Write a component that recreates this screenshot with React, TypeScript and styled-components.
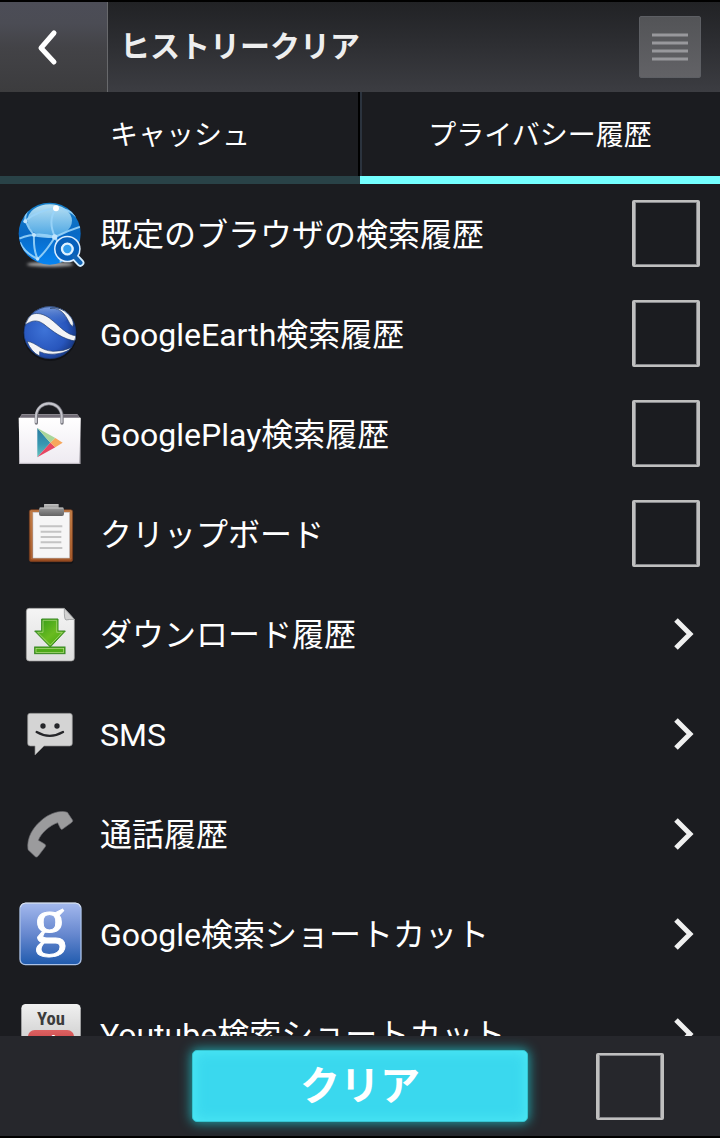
import React from 'react';
import styled, { createGlobalStyle } from 'styled-components';

const GlobalStyle = createGlobalStyle`
  *, *::before, *::after { box-sizing: border-box; }
  body {
    margin: 0;
    background: #000;
    color: #fff;
    font-family: Roboto, "Noto Sans CJK JP", sans-serif;
  }
  button, input { font: inherit; color: inherit; }
`;

const Screen = styled.div`
  display: flex;
  flex-direction: column;
  height: 100vh;
  border-top: 2px solid #000;
  border-bottom: 2px solid #000;
  background: #1b1c20;
`;

const Header = styled.header`
  display: flex;
  align-items: center;
  flex: none;
  height: 90px;
  padding-right: 19px;
  background: linear-gradient(#212225, #2e2f33 50%, #3c3d42);
`;

const BackButton = styled.button`
  display: flex;
  align-items: center;
  justify-content: center;
  width: 108px;
  height: 100%;
  padding: 0 12px 0 0;
  border: 0;
  border-right: 1px solid #68696c;
  background: linear-gradient(#4c4d57, #4b4c54 24%, #434347 50%, #3c3c3e);
`;

const Title = styled.h1`
  flex: 1;
  margin: 0;
  padding: 0 0 0 12px;
  color: #eee;
  font-size: 30px;
  font-weight: 700;
  line-height: 40px;
`;

const MenuButton = styled.button`
  display: flex;
  align-items: center;
  justify-content: center;
  width: 62px;
  height: 62px;
  padding: 0;
  border: 1px solid #5d5f64;
  border-radius: 2px;
  background: linear-gradient(#535457, #626266);
`;

const Tabs = styled.nav`
  display: grid;
  grid-template-columns: 1fr 1fr;
  flex: none;
`;

const Tab = styled.button<{ $active?: boolean }>`
  height: 92px;
  padding: 4px 0 0;
  border: 0;
  border-bottom: 8px solid ${p => (p.$active ? '#74ffff' : '#294247')};
  background: #1b1c20;
  box-shadow: inset ${p => (p.$active ? '2px 0 #2b333e' : '-2px 0 #000')};
  font-size: 28px;
  line-height: 40px;
`;

const List = styled.ul`
  flex: 1;
  min-height: 0;
  margin: 0;
  padding: 0;
  overflow-y: auto;
  scrollbar-width: none;
  list-style: none;
`;

const Row = styled.label`
  display: flex;
  align-items: center;
  gap: 14px;
  width: 100%;
  height: 100px;
  padding: 0 20px 0 14px;
  border: 0;
  background: none;
  text-align: left;
  cursor: pointer;
`;

const RowText = styled.span`
  flex: 1;
  padding-top: 2px;
  font-size: 32px;
  line-height: 44px;
`;

const Icon = styled.svg`
  flex: none;
  width: 72px;
  height: 72px;
`;

const Glyph = styled.svg`
  flex: none;
  display: block;
  fill: none;
`;

const ArrowSlot = styled.span`
  display: flex;
  flex: none;
  padding-right: 4px;
`;

const Check = styled.input`
  appearance: none;
  flex: none;
  width: 68px;
  height: 67px;
  margin: 0;
  border: solid #bfbfbf;
  border-width: 2px 3px;
  border-radius: 2px;
  box-shadow: inset 0 0 0 1px #85868a;
  &:checked { background: #3bd9ef; background-clip: content-box; padding: 8px; }
`;

const RowCheck = styled(Check)`
  margin-bottom: 2px;
`;

const Footer = styled.footer`
  display: grid;
  grid-template-columns: 1fr 336px 1fr;
  align-items: center;
  flex: none;
  height: 100px;
  background: #26272c;
`;

const ClearButton = styled.button`
  grid-column: 2;
  height: 72px;
  padding: 2px 0 0;
  border: 1px solid #36c4cf;
  border-radius: 5px;
  background: #3ad8ee;
  box-shadow: 0 0 12px 1px #1fa5ac, inset 0 0 14px #4feaf5;
  font-size: 40px;
  font-weight: 700;
  line-height: 48px;
`;

const FooterCheck = styled(Check)`
  justify-self: end;
  margin-right: 56px;
`;

const BrowserArt = () => (
  <>
    <defs>
      <linearGradient id="globe" x1="0" y1="0" x2="0" y2="1">
        <stop offset="0" stopColor="#167fc8" /><stop offset=".5" stopColor="#0869c5" /><stop offset="1" stopColor="#0785f2" />
      </linearGradient>
      <linearGradient id="shine" x1="0" y1="0" x2="0" y2="1">
        <stop offset="0" stopColor="#b8e0f3" /><stop offset="1" stopColor="#4aa5e3" />
      </linearGradient>
      <clipPath id="globeClip"><circle cx="149" cy="131" r="93" /></clipPath>
      <filter id="soft" x="-20%" y="-100%" width="140%" height="300%"><feGaussianBlur stdDeviation="4" /></filter>
    </defs>
    <ellipse cx="150" cy="223" rx="70" ry="7" fill="#aaa" filter="url(#soft)" />
    <circle cx="149" cy="131" r="93" fill="url(#globe)" />
    <ellipse cx="149" cy="92" rx="67" ry="49" fill="url(#shine)" />
    <g clipPath="url(#globeClip)" fill="none" stroke="#9ad4f8" strokeWidth="6" opacity=".9">
      <path d="M76 92Q115 61 168 55Q205 56 230 80M168 55Q142 91 165 141Q183 172 182 218M76 92Q85 115 102 135Q100 180 113 207M58 146Q110 124 165 141Q204 121 243 109M165 141Q137 186 113 207M76 92Q74 68 90 51M102 135Q122 141 165 141M113 207Q72 187 60 157" />
    </g>
    <g fill="#c1e4fc"><circle cx="168" cy="55" r="9" fill="#fff" /><circle cx="76" cy="94" r="6" /><circle cx="102" cy="135" r="6" /><circle cx="164" cy="141" r="8" /><circle cx="113" cy="207" r="5" /></g>
    <path d="M222 198L241 218" stroke="#d5edff" strokeWidth="24" strokeLinecap="round" />
    <circle cx="202" cy="177" r="40" fill="#dceeff" />
    <circle cx="202" cy="177" r="27" fill="#70bfff" stroke="#0760bb" strokeWidth="17" />
    <circle cx="202" cy="177" r="16" fill="#319dee" stroke="#e0f2ff" strokeWidth="7" />
    <path d="M223 199L241 218" stroke="#1264b5" strokeWidth="13" strokeLinecap="round" />
  </>
);

const EarthArt = () => (
  <>
    <defs>
      <radialGradient id="earth" cx=".4" cy=".45" r=".6">
        <stop offset="0" stopColor="#3e73d7" /><stop offset=".7" stopColor="#2856bd" /><stop offset="1" stopColor="#183a88" />
      </radialGradient>
      <linearGradient id="earthTop" x1="0" y1="0" x2="0" y2="1"><stop offset="0" stopColor="#c9ddf6" stopOpacity=".65" /><stop offset="1" stopColor="#4777cc" stopOpacity="0" /></linearGradient>
      <clipPath id="earthClip"><circle cx="150" cy="128" r="79" /></clipPath>
    </defs>
    <circle cx="150" cy="132" r="81" fill="#111216" />
    <g clipPath="url(#earthClip)">
      <circle cx="150" cy="128" r="79" fill="url(#earth)" />
      <ellipse cx="145" cy="74" rx="64" ry="32" fill="url(#earthTop)" />
      <g fill="#f3f4f6" stroke="#243f70" strokeWidth="2">
        <path d="M74 106C82 61 121 65 148 84C180 108 198 135 231 138V154C188 149 156 122 132 103C111 87 94 91 74 106Z" />
        <path d="M150 55C174 52 190 65 202 87Q209 103 218 110Q225 92 207 72Q184 48 150 55Z" />
        <path d="M81 154C111 158 119 181 159 184Q190 185 216 172Q202 187 174 191Q142 196 119 185L119 198Q94 187 81 154Z" />
      </g>
    </g>
    <circle cx="150" cy="128" r="78" fill="none" stroke="#193566" strokeWidth="3" opacity=".7" />
  </>
);

const PlayArt = () => (
  <>
    <defs>
      <linearGradient id="bag" x1="0" y1="0" x2="0" y2="1"><stop offset="0" stopColor="#fff" /><stop offset="1" stopColor="#eeeaf1" /></linearGradient>
      <linearGradient id="playBlue" x1="0" y1="0" x2="0" y2="1"><stop offset="0" stopColor="#2a7ba0" /><stop offset=".55" stopColor="#3897b1" /><stop offset="1" stopColor="#66c4bf" /></linearGradient>
    </defs>
    <path d="M65 72H232L242 86V222H57V86Z" fill="#96939a" />
    <path d="M65 74H233L238 84H60Z" fill="#706b75" />
    <path d="M56 83H242L238 221H59Z" fill="url(#bag)" />
    <path d="M60 220H238" stroke="#bbb6bf" strokeWidth="3" />
    <path d="M109 99V78C112 28 181 28 186 78V99" fill="none" stroke="#75757d" strokeWidth="10" strokeLinecap="round" />
    <path d="M108 97V76C113 29 180 29 185 76V97" fill="none" stroke="#c5c5cc" strokeWidth="6" strokeLinecap="round" />
    <path d="M112 114V202L151 158Z" fill="url(#playBlue)" />
    <path d="M112 114L166 144L151 158Z" fill="#a9d69a" />
    <path d="M112 202L166 172L151 158Z" fill="#e74763" />
    <path d="M151 158L166 144L188 158L166 172Z" fill="#f7a75b" />
  </>
);

const ClipboardArt = () => (
  <>
    <defs>
      <linearGradient id="wood" x1="0" y1="0" x2="0" y2="1"><stop offset="0" stopColor="#bd7944" /><stop offset="1" stopColor="#96491f" /></linearGradient>
      <linearGradient id="clip" x1="0" y1="0" x2="0" y2="1"><stop offset="0" stopColor="#b5b5b5" /><stop offset=".5" stopColor="#888" /><stop offset="1" stopColor="#646464" /></linearGradient>
    </defs>
    <rect x="91" y="63" width="129" height="158" rx="7" fill="#121317" />
    <rect x="88" y="59" width="130" height="156" rx="6" fill="url(#wood)" stroke="#743c1f" strokeWidth="2" />
    <path d="M94 67V207H213V67" fill="none" stroke="#d18b4e" strokeWidth="2" opacity=".7" />
    <rect x="99" y="67" width="109" height="137" fill="#f6f6f6" stroke="#c9cbd0" strokeWidth="2" />
    <path d="M132 43H176V53H188Q192 53 192 59V72Q192 78 186 78H123Q117 78 117 72V58Q117 53 122 53H132Z" fill="url(#clip)" />
    <path d="M133 44H175M119 54H190" stroke="#c7c7c7" strokeWidth="3" />
    <path d="M119 109H187M122 125H184M122 141H184M122 157H184M119 174H187" stroke="#c4c4c4" strokeWidth="6" />
  </>
);

const DownloadArt = () => (
  <>
    <defs>
      <linearGradient id="paper" x1="0" y1="0" x2="0" y2="1"><stop offset="0" stopColor="#f5f5f5" /><stop offset="1" stopColor="#dedede" /></linearGradient>
      <linearGradient id="green" x1="0" y1="0" x2="1" y2="1"><stop offset="0" stopColor="#2c9718" /><stop offset=".55" stopColor="#6abb20" /><stop offset="1" stopColor="#38a309" /></linearGradient>
    </defs>
    <path d="M88 55H193L223 88V204Q223 213 214 213H88Q79 213 79 204V64Q79 55 88 55Z" fill="url(#paper)" stroke="#999" strokeWidth="2" />
    <path d="M193 55Q192 89 198 90Q206 88 223 88Z" fill="#d3d3d3" stroke="#85888a" strokeWidth="2" />
    <path d="M125 87H174V123H196L151 171L104 123H125Z" fill="url(#green)" stroke="#368622" strokeWidth="3" />
    <path d="M129 91H170V127H187L151 165L113 127H129Z" fill="none" stroke="#b9dd8b" strokeWidth="2" />
    <rect x="104" y="171" width="91" height="20" fill="#4eaa18" stroke="#368622" strokeWidth="3" />
    <rect x="108" y="175" width="83" height="12" fill="none" stroke="#b9dd8b" strokeWidth="2" />
  </>
);

const SmsArt = () => (
  <>
    <path d="M90 70H209Q217 70 217 78V160Q217 168 209 168H132L105 195V168H91Q83 168 83 160V78Q83 70 90 70Z" fill="#d4d4d4" stroke="#8c8c8c" strokeWidth="2" />
    <circle cx="129" cy="108" r="8" fill="#25262a" /><circle cx="171" cy="108" r="8" fill="#25262a" />
    <path d="M110 126Q149 149 189 126" fill="none" stroke="#25262a" strokeWidth="7" strokeLinecap="round" />
  </>
);

const PhoneArt = () => (
  <path d="M84 179C79 143 99 110 130 86C151 70 181 59 202 67L218 91Q219 96 213 99L188 117Q184 120 181 115L173 98C151 105 122 130 115 151L134 162Q139 165 136 170L114 199Q111 203 106 200Z" fill="#9b9b9d" stroke="#6b6b6f" strokeWidth="2" strokeLinejoin="round" />
);

const GoogleArt = () => (
  <>
    <defs><linearGradient id="googleBlue" x1="0" y1="0" x2="0" y2="1"><stop offset="0" stopColor="#a3b8ed" /><stop offset=".5" stopColor="#6788cf" /><stop offset="1" stopColor="#205bae" /></linearGradient></defs>
    <rect x="60" y="40" width="183" height="184" rx="16" fill="url(#googleBlue)" stroke="#aac1e6" strokeWidth="4" />
    <path d="M61 52Q63 40 76 39H227Q240 40 242 52" fill="none" stroke="#e0e6f5" strokeWidth="3" />
    <text x="150" y="159" textAnchor="middle" fill="#fff" stroke="#fff" strokeWidth="3" fontFamily="Liberation Serif, serif" fontSize="195">g</text>
  </>
);

const YoutubeArt = () => (
  <>
    <defs>
      <linearGradient id="tubeCard" x1="0" y1="0" x2="0" y2="1"><stop offset="0" stopColor="#f0f0f0" /><stop offset="1" stopColor="#bbb" /></linearGradient>
      <linearGradient id="tubeRed" x1="0" y1="0" x2="0" y2="1"><stop offset="0" stopColor="#dc6363" /><stop offset="1" stopColor="#b51d20" /></linearGradient>
    </defs>
    <rect x="64" y="42" width="178" height="180" rx="13" fill="url(#tubeCard)" />
    <text x="153" y="106" textAnchor="middle" fill="#3c3c3c" fontFamily="Roboto Condensed, Liberation Sans Narrow, Liberation Sans, sans-serif" fontWeight="700" fontSize="56">You</text>
    <rect x="84" y="120" width="138" height="84" rx="20" fill="url(#tubeRed)" />
    <text x="153" y="176" textAnchor="middle" fill="#fff" fontFamily="Roboto Condensed, Liberation Sans Narrow, Liberation Sans, sans-serif" fontWeight="700" fontSize="56">Tube</text>
  </>
);

const items: { text: string; art: React.FC; kind: 'check' | 'link' }[] = [
  { text: '既定のブラウザの検索履歴', art: BrowserArt, kind: 'check' },
  { text: 'GoogleEarth検索履歴', art: EarthArt, kind: 'check' },
  { text: 'GooglePlay検索履歴', art: PlayArt, kind: 'check' },
  { text: 'クリップボード', art: ClipboardArt, kind: 'check' },
  { text: 'ダウンロード履歴', art: DownloadArt, kind: 'link' },
  { text: 'SMS', art: SmsArt, kind: 'link' },
  { text: '通話履歴', art: PhoneArt, kind: 'link' },
  { text: 'Google検索ショートカット', art: GoogleArt, kind: 'link' },
  { text: 'Youtube検索ショートカット', art: YoutubeArt, kind: 'link' },
];

export default function App() {
  return (
    <>
      <GlobalStyle />
      <Screen>
        <Header>
          <BackButton type="button" aria-label="戻る">
            <Glyph width="24" height="40" viewBox="0 0 24 40">
              <path d="M18 6L5 21L18 35" stroke="#fff" strokeWidth="5" strokeLinecap="round" strokeLinejoin="round" />
            </Glyph>
          </BackButton>
          <Title>ヒストリークリア</Title>
          <MenuButton type="button" aria-label="メニュー">
            <Glyph width="36" height="30" viewBox="0 0 36 30">
              <path d="M0 3H36M0 11H36M0 19H36M0 27H36" stroke="#98989c" strokeWidth="3" />
            </Glyph>
          </MenuButton>
        </Header>
        <Tabs>
          <Tab type="button">キャッシュ</Tab>
          <Tab type="button" $active aria-current="page">プライバシー履歴</Tab>
        </Tabs>
        <List>
          {items.map(({ text, art: Art, kind }) => (
            <li key={text}>
              <Row as={kind === 'link' ? 'button' : 'label'}>
                <Icon viewBox="42 24 216 216" aria-hidden="true"><Art /></Icon>
                <RowText>{text}</RowText>
                {kind === 'check' ? (
                  <RowCheck type="checkbox" />
                ) : (
                  <ArrowSlot>
                    <Glyph width="24" height="36" viewBox="0 0 24 36">
                      <path d="M4 4L18 18L4 32" stroke="#f0f0f0" strokeWidth="5" />
                    </Glyph>
                  </ArrowSlot>
                )}
              </Row>
            </li>
          ))}
        </List>
        <Footer>
          <ClearButton type="button">クリア</ClearButton>
          <FooterCheck type="checkbox" aria-label="すべて選択" />
        </Footer>
      </Screen>
    </>
  );
}
